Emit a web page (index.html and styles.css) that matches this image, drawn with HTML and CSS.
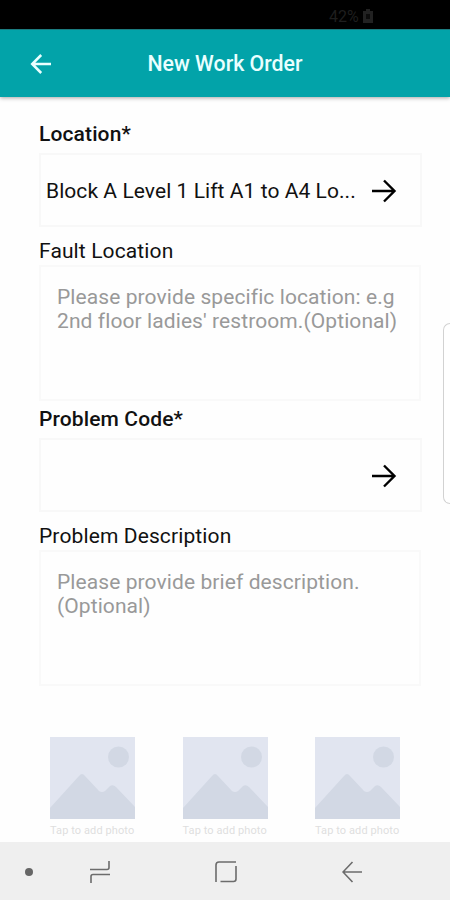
FILE: index.html
```html
<!DOCTYPE html>
<html lang="en">
<head>
    <meta charset="UTF-8">
    <meta name="viewport" content="width=device-width, initial-scale=1.0">
    <title>New Work Order</title>
    <link rel="stylesheet" href="styles.css">
</head>
<body>
    <div class="status-bar">
        <span class="battery-text">42%</span>
        <svg class="battery-icon" width="10" height="14" viewBox="0 0 10 14">
            <path d="M3 0h4v2h3v12H0V2h3z" fill="#222"/>
            <path d="M3 5h4v5H3z" fill="#0c0c0c"/>
        </svg>
    </div>

    <header class="header">
        <button class="back-button" aria-label="Back">
            <svg width="22" height="20" viewBox="0 0 22 20" fill="none" stroke="#eaffff" stroke-width="2.5">
                <path d="M21 10H2M11.2 1L2.2 10l9 9"/>
            </svg>
        </button>
        <h1>New Work Order</h1>
    </header>

    <main class="form">
        <div class="form-group">
            <label class="required">Location*</label>
            <div class="select-box">
                <span class="select-value">Block A Level 1 Lift A1 to A4 Lo...</span>
                <svg class="arrow" width="25" height="24" viewBox="0 0 25 24" fill="none" stroke="#000" stroke-width="2.4">
                    <path d="M0 12h23M12 1.500l10.500 10.500L12 22.500"/>
                </svg>
            </div>
        </div>

        <div class="form-group">
            <label for="faultLocation">Fault Location</label>
            <textarea id="faultLocation" placeholder="Please provide specific location: e.g&#10;2nd floor ladies' restroom.(Optional)"></textarea>
        </div>

        <div class="form-group">
            <label class="required">Problem Code*</label>
            <div class="select-box">
                <span class="select-value"></span>
                <svg class="arrow" width="25" height="24" viewBox="0 0 25 24" fill="none" stroke="#000" stroke-width="2.4">
                    <path d="M0 12h23M12 1.500l10.500 10.500L12 22.500"/>
                </svg>
            </div>
        </div>

        <div class="form-group">
            <label for="problemDescription">Problem Description</label>
            <textarea id="problemDescription" placeholder="Please provide brief description.&#10;(Optional)"></textarea>
        </div>

        <div class="photos">
            <div class="photo">
                <svg width="85" height="82" viewBox="0 0 85 82">
                    <rect width="85" height="82" fill="#e1e5f0"/>
                    <circle cx="68.500" cy="20" r="10.500" fill="#d2d8e4"/>
                    <path d="M0 71L29 39q3-4 6 0l14 15q3 2 6 0l5-5q3-2 6 1l19 20v12H0z" fill="#d2d8e4"/>
                </svg>
                <span>Tap to add photo</span>
            </div>
            <div class="photo">
                <svg width="85" height="82" viewBox="0 0 85 82">
                    <rect width="85" height="82" fill="#e1e5f0"/>
                    <circle cx="68.500" cy="20" r="10.500" fill="#d2d8e4"/>
                    <path d="M0 71L29 39q3-4 6 0l14 15q3 2 6 0l5-5q3-2 6 1l19 20v12H0z" fill="#d2d8e4"/>
                </svg>
                <span>Tap to add photo</span>
            </div>
            <div class="photo">
                <svg width="85" height="82" viewBox="0 0 85 82">
                    <rect width="85" height="82" fill="#e1e5f0"/>
                    <circle cx="68.500" cy="20" r="10.500" fill="#d2d8e4"/>
                    <path d="M0 71L29 39q3-4 6 0l14 15q3 2 6 0l5-5q3-2 6 1l19 20v12H0z" fill="#d2d8e4"/>
                </svg>
                <span>Tap to add photo</span>
            </div>
        </div>
    </main>

    <div class="edge-handle"></div>

    <nav class="nav-bar">
        <span class="nav-dot"></span>
        <svg class="nav-recent" width="20" height="22" viewBox="0 0 20 22" fill="none" stroke="#6c6c6c" stroke-width="1.600">
            <path d="M0 8.500h17q2 0 2-2V0M20 13.500H3q-2 0-2 2V22"/>
        </svg>
        <svg class="nav-home" width="22" height="22" viewBox="0 0 22 22" fill="none" stroke="#6c6c6c" stroke-width="1.600">
            <path d="M1 21V4q0-3 3-3h17M21 5v13q0 2.500-2.500 2.500H5.500"/>
        </svg>
        <svg class="nav-back" width="20" height="22" viewBox="0 0 20 22" fill="none" stroke="#6c6c6c" stroke-width="1.600">
            <path d="M20 11H1M10.500 1L1 11l9.500 10"/>
        </svg>
    </nav>
</body>
</html>
```

FILE: styles.css
```css
* {
    box-sizing: border-box;
    margin: 0;
    padding: 0;
}

body {
    font-family: Roboto, 'Liberation Sans', sans-serif;
    background-color: #fefefe;
    color: #111;
    display: flex;
    flex-direction: column;
    height: 900px;
    overflow: hidden;
}

.status-bar {
    display: flex;
    align-items: center;
    height: 29px;
    padding: 3px 0 0 329px;
    background-color: #000;
    color: #1e1e1e;
    font-size: 16px;
    flex-shrink: 0;
}

.battery-text {
    width: 34px;
}

.header {
    display: grid;
    grid-template-columns: 81px 1fr 81px;
    align-items: center;
    height: 68px;
    background-color: #02a3a9;
    border-top: 1px solid #1b7c80;
    box-shadow: 0 1px 4px rgba(0, 0, 0, 0.35);
    flex-shrink: 0;
}

.header h1 {
    color: #eaffff;
    font-size: 21.3px;
    font-weight: 500;
    text-align: center;
    white-space: nowrap;
}

.back-button {
    display: flex;
    justify-content: center;
    background: none;
    border: none;
}

.form {
    flex: 1;
    padding: 24px 28px 0 39px;
}

label {
    display: block;
    height: 27px;
    padding-top: 1px;
    font-size: 21px;
    line-height: 24px;
    letter-spacing: 0.12px;
}

label.required {
    height: 32px;
    font-weight: 500;
}

.form-group {
    margin-bottom: 11px;
}

.form-group:nth-child(even) {
    margin-bottom: 5px;
}

.select-box {
    display: flex;
    align-items: center;
    justify-content: space-between;
    height: 74px;
    padding: 2px 23px 0 5px;
    border: 2px solid #f8f8f8;
}

.select-value {
    font-size: 21px;
    letter-spacing: 0.06px;
    white-space: nowrap;
}

textarea {
    display: block;
    width: 382px;
    height: 136px;
    padding: 18px 10px 0 16px;
    background: none;
    border: 2px solid #f9f9f9;
    outline: none;
    resize: none;
    overflow: hidden;
    font-family: inherit;
    font-size: 21px;
    line-height: 24px;
    letter-spacing: 0.09px;
    white-space: pre;
}

textarea::placeholder {
    color: #999;
}

.photos {
    display: flex;
    gap: 47.5px;
    margin-top: 51px;
    padding-left: 11px;
}

.photo {
    width: 85px;
}

.photo svg {
    display: block;
}

.photo span {
    display: block;
    margin-top: 5px;
    color: #dedede;
    font-size: 11px;
    line-height: 14px;
    letter-spacing: 0.1px;
    white-space: nowrap;
}

/* edge panel handle sits over the page */
.edge-handle {
    position: absolute;
    top: 323px;
    right: 0;
    width: 7px;
    height: 181px;
    border: 1.5px solid #d2d2d2;
    border-right: none;
    border-radius: 7px 0 0 7px;
    background-color: #fff;
}

.nav-bar {
    display: flex;
    align-items: center;
    height: 58px;
    padding: 2px 0 0 25px;
    background-color: #efefef;
    flex-shrink: 0;
}

.nav-dot {
    width: 8px;
    height: 8px;
    border-radius: 50%;
    background-color: #666;
}

.nav-recent {
    margin-left: 57px;
}

.nav-home {
    margin-left: 105px;
}

.nav-back {
    margin-left: 105px;
}
```
